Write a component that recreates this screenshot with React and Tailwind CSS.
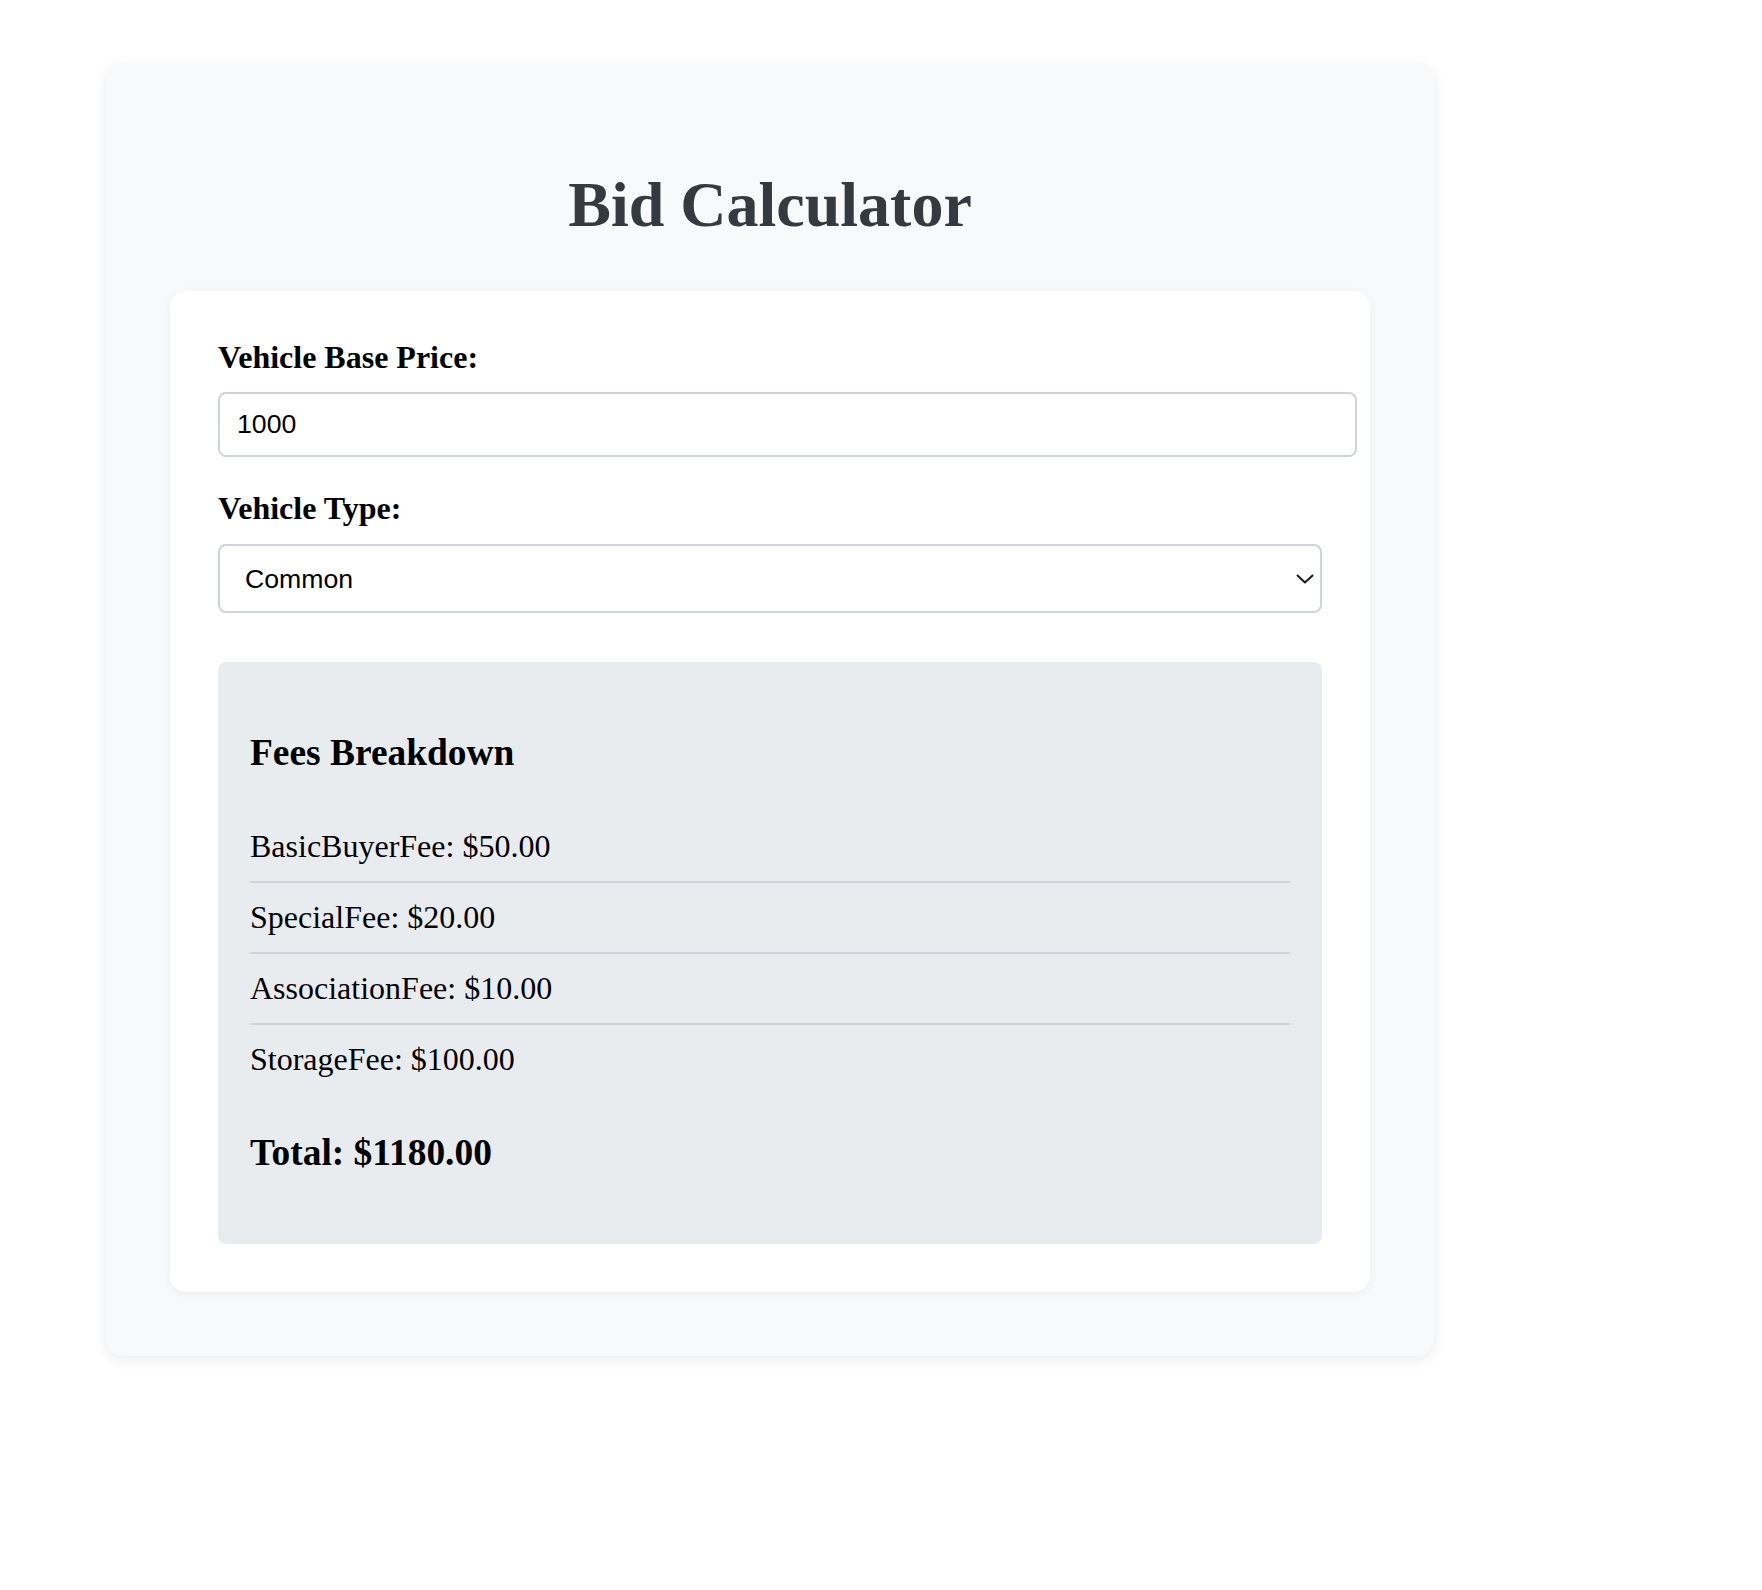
import { useState } from 'react';

const fees = [
  { name: 'BasicBuyerFee', amount: 50 },
  { name: 'SpecialFee', amount: 20 },
  { name: 'AssociationFee', amount: 10 },
  { name: 'StorageFee', amount: 100 },
];

const serif = { fontFamily: '"Liberation Serif", "Times New Roman", serif' };
const sans = { fontFamily: '"Liberation Sans", Arial, sans-serif' };

const App = () => {
  const [price, setPrice] = useState('1000');
  const [type, setType] = useState('Common');

  const total = Number(price || 0) + fees.reduce((sum, f) => sum + f.amount, 0);

  return (
    <div className="min-h-[1590px] bg-white pt-[63px] pl-[106px]" style={serif}>
      <div className="w-[1328px] rounded-[16px] bg-[#f8f9fa] px-16 pt-16 pb-16 shadow-[0_4px_14px_rgba(0,0,0,0.08)]">
        <h1 className="mt-[41px] mb-[49px] text-center text-[64px] font-bold leading-[74px] text-[#343a40]">
          Bid Calculator
        </h1>

        <div className="rounded-[16px] bg-white px-12 pt-[48px] pb-12 shadow-[0_2px_10px_rgba(0,0,0,0.05)]">
          {/* Base price */}
          <label className="mb-[16px] block text-[32px] font-bold leading-[37px] text-black">
            Vehicle Base Price:
          </label>
          <input
            type="text"
            value={price}
            onChange={(e) => setPrice(e.target.value)}
            className="block h-[65px] w-[1139px] rounded-[8px] border-2 border-[#ced4da] bg-white px-[17px] text-[26.67px] text-black outline-none"
            style={sans}
          />

          <label className="mt-[33px] mb-[17px] block text-[32px] font-bold leading-[37px] text-black">
            Vehicle Type:
          </label>
          <div className="relative w-full">
            <select
              value={type}
              onChange={(e) => setType(e.target.value)}
              className="block h-[69px] w-full appearance-none rounded-[8px] border-2 border-[#ced4da] bg-white pl-[25px] text-[26.67px] text-black outline-none"
              style={sans}
            >
              <option>Common</option>
              <option>Luxury</option>
            </select>
            <svg
              className="pointer-events-none absolute right-[8px] top-[30px]"
              width="18"
              height="10"
              viewBox="0 0 18 10"
              fill="none"
            >
              <path d="M1.5 1.5 L9 8.5 L16.5 1.5" stroke="#1a1a1a" strokeWidth="2" strokeLinecap="round" strokeLinejoin="round" />
            </svg>
          </div>

          {/* Fees breakdown */}
          <div className="mt-[49px] rounded-[8px] bg-[#e9ecef] p-8 text-black">
            <h3 className="my-[37.4px] text-[37.44px] font-bold leading-[43px]">Fees Breakdown</h3>
            <ul>
              {fees.map((f, i) => (
                <li
                  key={f.name}
                  className={`py-4 text-[32px] leading-[37px] ${
                    i < fees.length - 1 ? 'border-b-2 border-[#ced4da]' : ''
                  }`}
                >
                  {f.name}: ${f.amount.toFixed(2)}
                </li>
              ))}
            </ul>
            <h3 className="my-[37.4px] text-[37.44px] font-bold leading-[43px]">
              Total: ${total.toFixed(2)}
            </h3>
          </div>
        </div>
      </div>
    </div>
  );
};

export default App;
